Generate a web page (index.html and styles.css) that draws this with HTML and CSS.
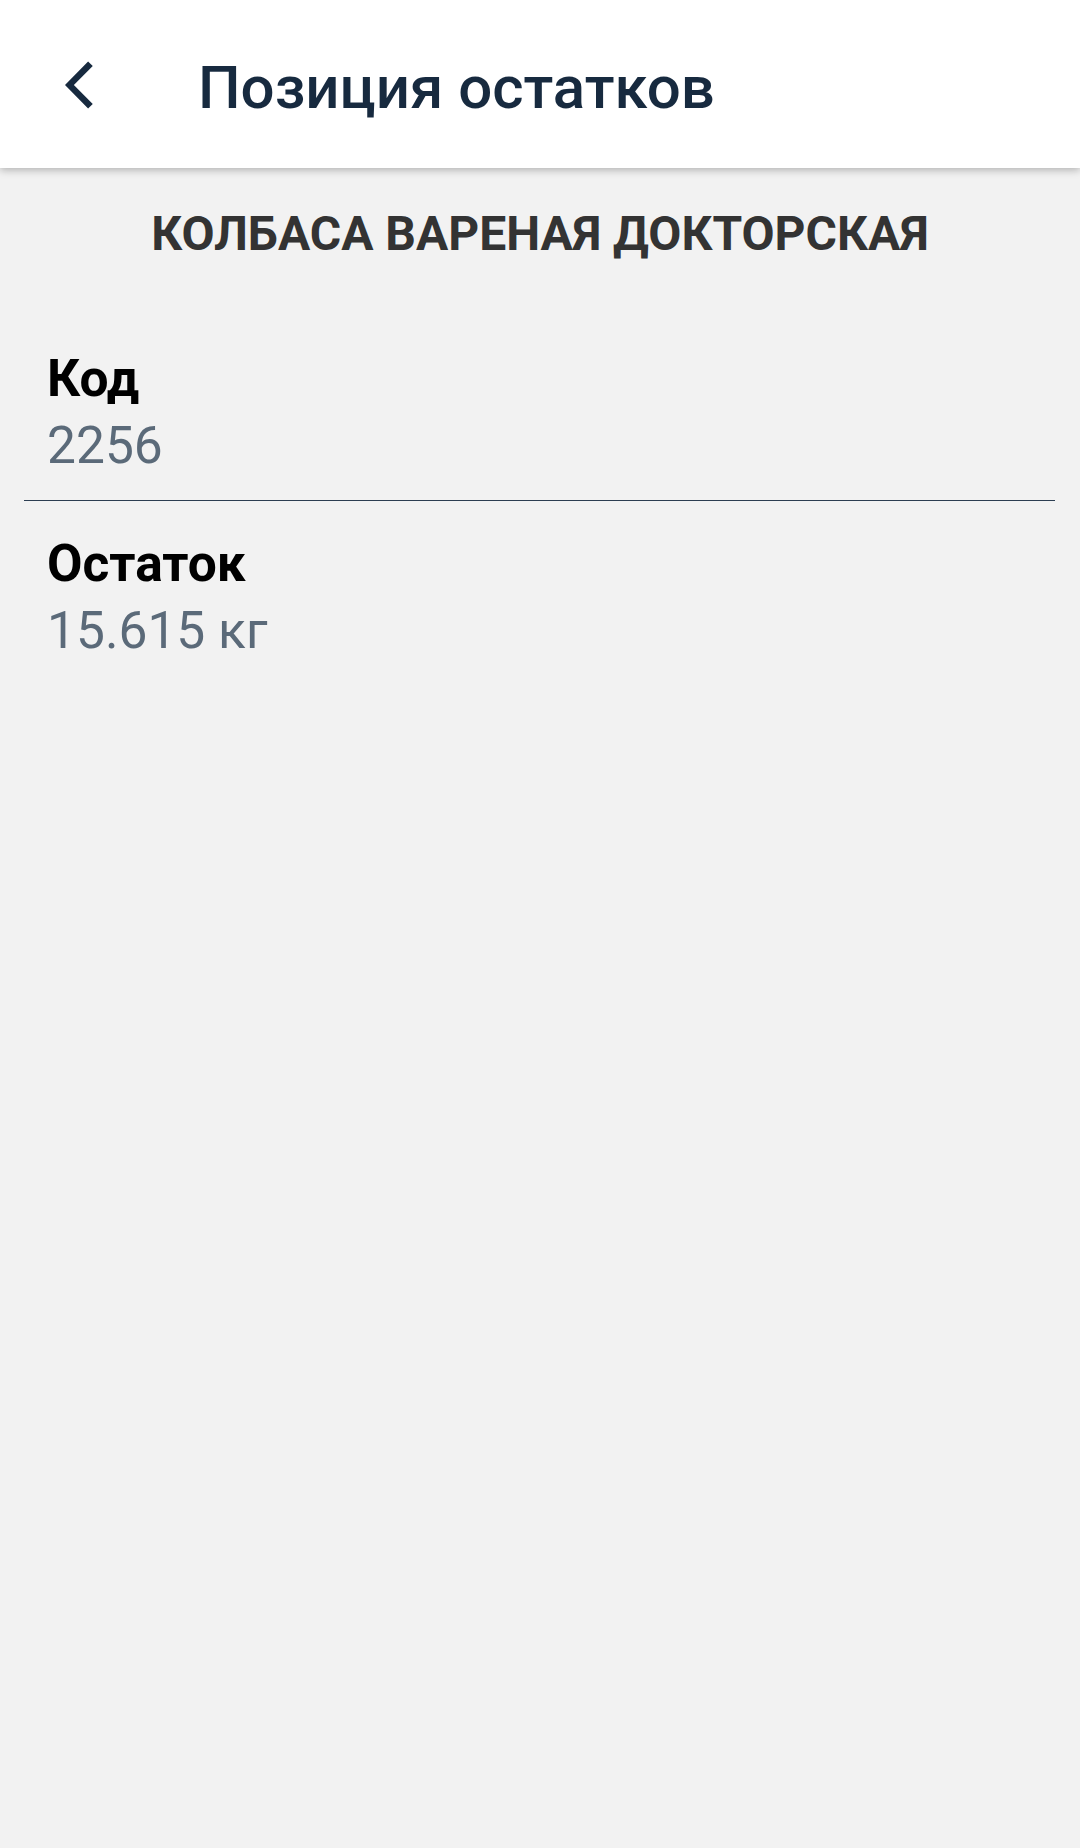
FILE: index.html
```html
<!DOCTYPE html>
<html lang="ru">
<head>
<meta charset="utf-8">
<title>Позиция остатков</title>
<link rel="stylesheet" href="styles.css">
</head>
<body>
<header class="appbar">
  <svg class="back" width="56" height="56" viewBox="0 0 24 24" aria-hidden="true">
    <path d="M11.9 3.9L9.9 1.9 0 12l9.9 10.1 2-2L3.8 12z" fill="#172a3f"/>
  </svg>
  <h1 class="appbar-title">Позиция остатков</h1>
</header>
<main class="content">
  <h2 class="product">КОЛБАСА ВАРЕНАЯ ДОКТОРСКАЯ</h2>
  <div class="field field-first">
    <div class="field-label">Код</div>
    <div class="field-value">2256</div>
  </div>
  <div class="divider"></div>
  <div class="field">
    <div class="field-label">Остаток</div>
    <div class="field-value">15.615 кг</div>
  </div>
</main>
</body>
</html>
```
FILE: styles.css
```css
html, body {
  margin: 0;
  padding: 0;
}
body {
  width: 1080px;
  min-height: 1848px;
  background: #f2f2f2;
  font-family: Roboto, "Noto Sans", sans-serif;
}
.appbar {
  position: relative;
  z-index: 1;
  height: 168px;
  box-sizing: border-box;
  padding-top: 7px;
  background: #ffffff;
  display: flex;
  align-items: center;
  box-shadow: 0 2px 8px rgba(0, 0, 0, 0.28);
}
.back {
  margin: 0 0 6px 65px;
  flex: none;
}
.appbar-title {
  margin: 0 0 0 77px;
  font-size: 60px;
  line-height: 60px;
  font-weight: 500;
  color: #172a3f;
}
.content {
  display: flex;
  flex-direction: column;
}
.product {
  margin: 36px 0 0 0;
  font-size: 48px;
  line-height: 60px;
  font-weight: 700;
  color: #333333;
  text-align: center;
}
.field {
  padding: 0 47px;
  display: flex;
  flex-direction: column;
}
.field-first {
  margin-top: 81px;
  padding-bottom: 21px;
}
.divider {
  height: 1px;
  margin: 0 25px 0 24px;
  background: #2c3e52;
}
.divider + .field {
  margin-top: 29px;
}
.field-label {
  font-size: 51.5px;
  line-height: 68px;
  font-weight: 700;
  color: #000000;
}
.field-value {
  font-size: 51.5px;
  line-height: 66px;
  font-weight: 400;
  color: #5b6a79;
}
```
